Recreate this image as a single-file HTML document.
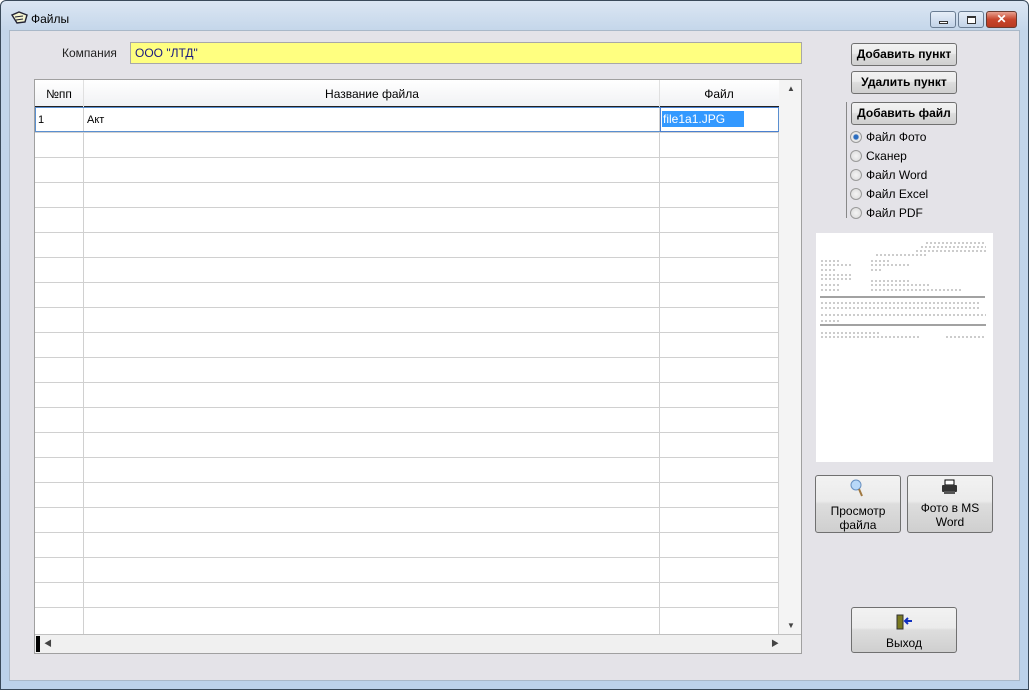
<!DOCTYPE html>
<html><head><meta charset="utf-8"><style>
*{box-sizing:border-box}
body{margin:0;width:1029px;height:690px;overflow:hidden;background:#fff;font-family:"Liberation Sans","Noto Sans CJK SC",sans-serif;font-size:12px;color:#000;position:relative}
.abs{position:absolute}
.frame{left:0;top:0;width:1029px;height:690px;border:1px solid #3a4a5a;border-radius:6px 6px 0 0;background:linear-gradient(#dbe6f3,#c4d6ea 30px,#bcd2ea);}
.client{left:9px;top:30px;width:1011px;height:651px;background:#e4e3e8;border:1px solid #a9b8c8}
.btn{position:absolute;border:1px solid #707070;border-radius:3px;background:linear-gradient(#f2f2f2 0,#ebebeb 45%,#dddddd 50%,#cfcfcf);text-align:center;font-size:12px}
.grid{left:34px;top:79px;width:768px;height:575px;background:#fff;border:1px solid #a0a0a0}
.hl{position:absolute;left:0;width:744px;height:1px;background:#d0d0d0}
.vl{position:absolute;top:0;width:1px;background:#d0d0d0}
.radio{position:absolute;left:850px;width:12px;height:12px;border-radius:50%;border:1px solid #9a9a9a;background:radial-gradient(#f4f4f4,#d8d8d8)}
.rl{position:absolute;left:866px;font-size:12px}
</style></head><body>
<div class="abs frame"></div>
<svg class="abs" style="left:11px;top:11px" width="18" height="14" viewBox="0 0 18 14"><path d="M1 4 L8 1 L16 4 L14 11 L6 12 Z" fill="#f4f4d0" stroke="#223" stroke-width="1.4"/><path d="M4 6 L12 5 M5 9 L12 8" stroke="#223"/></svg>
<div class="abs" style="left:31px;top:12px;font-size:12px">Файлы</div>
<div class="abs" style="left:930px;top:11px;width:26px;height:17px;border:1px solid #6a7d93;border-radius:3px;background:linear-gradient(#e6eef8,#c2d3e8)"><div style="margin:9px auto 0;width:9px;height:3px;border:1px solid #333;background:#fff"></div></div>
<div class="abs" style="left:958px;top:11px;width:26px;height:17px;border:1px solid #6a7d93;border-radius:3px;background:linear-gradient(#e6eef8,#c2d3e8)"><div style="margin:4px auto 0;width:9px;height:8px;border:1px solid #333;border-top-width:2px;background:#fff"></div></div>
<div class="abs" style="left:986px;top:11px;width:31px;height:17px;border:1px solid #6a3a30;border-radius:3px;background:linear-gradient(#e8a090,#c8452c 50%,#b83a22);color:#fff;font-weight:bold;text-align:center;font-size:12px;line-height:15px">✕</div>
<div class="abs client"></div>
<div class="abs" style="left:62px;top:46px;font-size:12px;color:#222">Компания</div>
<div class="abs" style="left:130px;top:42px;width:672px;height:22px;background:#ffff80;border:1px solid #a8a8a8;padding:3px 4px;font-size:12px;color:#1a1a80">ООО "ЛТД"</div>
<div class="abs grid">
 <div class="abs" style="left:0;top:0;width:744px;height:27px;background:linear-gradient(#fff,#f1f2f4);border-bottom:1px solid #222"></div>
 <div class="abs" style="left:0;top:7px;width:48px;text-align:center">№пп</div>
 <div class="abs" style="left:49px;top:7px;width:576px;text-align:center">Название файла</div>
 <div class="abs" style="left:625px;top:7px;width:118px;text-align:center">Файл</div>
 <div class="vl" style="left:48px;height:27px;background:#e0e0e0"></div>
 <div class="vl" style="left:624px;height:27px;background:#e0e0e0"></div>
 <div class="vl" style="left:48px;top:27px;height:527px"></div>
 <div class="vl" style="left:624px;top:27px;height:527px"></div>
 <div class="vl" style="left:743px;top:27px;height:527px"></div>
 <div id="rows"></div>
 <div class="abs" style="left:0;top:27px;width:744px;height:25px;border:1px solid #5a8fd0"></div>
 <div class="abs" style="left:3px;top:34px;font-size:11px">1</div>
 <div class="abs" style="left:52px;top:34px;font-size:11px">Акт</div>
 <div class="abs" style="left:625px;top:27px;width:121px;height:25px;border:1px solid #4a80d0"></div>
 <div class="abs" style="left:627px;top:31px;width:82px;height:16px;background:#3399ff;color:#fff;padding-left:1px;line-height:16px">file1a1.JPG</div>
 <div class="abs" style="left:744px;top:0;width:22px;height:554px;background:#f4f4f4"></div>
 <div class="abs" style="left:752px;top:4px;font-size:8px;color:#444">▲</div>
 <div class="abs" style="left:752px;top:541px;font-size:8px;color:#444">▼</div>
 <div class="abs" style="left:0;top:554px;width:766px;height:19px;background:#f0f0f0;border-top:1px solid #c0c0c0"></div>
 <div class="abs" style="left:1px;top:556px;width:4px;height:16px;background:#000"></div>
 <div class="abs" style="left:9px;top:558px;font-size:8px;color:#444">◀</div>
 <div class="abs" style="left:736px;top:558px;font-size:8px;color:#444">▶</div>
</div>
<script>
var h='';for(var i=0;i<20;i++){h+='<div class="hl" style="top:'+(52+i*25)+'px"></div>';}
document.getElementById('rows').innerHTML=h;
</script>
<div class="btn" style="left:851px;top:43px;width:106px;height:23px;line-height:21px;font-weight:bold">Добавить пункт</div>
<div class="btn" style="left:851px;top:71px;width:106px;height:23px;line-height:21px;font-weight:bold">Удалить пункт</div>
<div class="abs" style="left:846px;top:102px;width:1px;height:116px;background:#888"></div>
<div class="btn" style="left:851px;top:102px;width:106px;height:23px;line-height:21px;font-weight:bold">Добавить файл</div>
<div class="radio" style="top:131px;background:radial-gradient(#2a6cc0 30%,#e8e8e8 45%)"></div><div class="rl" style="top:130px">Файл Фото</div>
<div class="radio" style="top:150px"></div><div class="rl" style="top:149px">Сканер</div>
<div class="radio" style="top:169px"></div><div class="rl" style="top:168px">Файл Word</div>
<div class="radio" style="top:188px"></div><div class="rl" style="top:187px">Файл Excel</div>
<div class="radio" style="top:207px"></div><div class="rl" style="top:206px">Файл PDF</div>
<div class="abs" style="left:816px;top:233px;width:177px;height:229px;background:#fff">
 <svg width="177" height="229"><g stroke="#999" stroke-width="1" stroke-dasharray="2 2">
 <path d="M110 10h60M105 14h65M100 18h70M60 22h50M5 28h20M55 28h20M5 32h30M55 32h40M5 37h15M55 37h10M5 42h30M5 46h30M55 48h40M5 52h20M55 52h60M5 57h20M55 57h90M5 70h160M5 75h160M5 82h165M5 88h20M5 100h60M5 104h100M130 104h40"/></g>
 <path d="M4 64h165M4 92h166" stroke="#444"/></svg>
</div>
<div class="btn" style="left:815px;top:475px;width:86px;height:58px;padding-top:28px;line-height:14px">Просмотр<br>файла</div>
<svg class="abs" style="left:849px;top:478px" width="16" height="20"><circle cx="7" cy="7" r="5" fill="#b8d8f8" stroke="#6890c0"/><path d="M10 11 L13 18" stroke="#a07840" stroke-width="2"/></svg>
<div class="btn" style="left:907px;top:475px;width:86px;height:58px;padding-top:25px;line-height:14px">Фото в MS<br>Word</div>
<svg class="abs" style="left:941px;top:479px" width="18" height="16"><rect x="4" y="1" width="9" height="5" fill="#fff" stroke="#000"/><rect x="1" y="6" width="15" height="7" rx="1" fill="#333"/><rect x="3" y="12" width="11" height="3" fill="#555"/></svg>
<div class="btn" style="left:851px;top:607px;width:106px;height:46px;padding-top:28px;line-height:14px">Выход</div>
<svg class="abs" style="left:896px;top:614px" width="18" height="16"><rect x="1" y="1" width="6" height="14" fill="#7a7a20" stroke="#333"/><path d="M9 7h7M12 4l-3 3 3 3" stroke="#1030c0" stroke-width="2" fill="none"/></svg>
</body></html>
